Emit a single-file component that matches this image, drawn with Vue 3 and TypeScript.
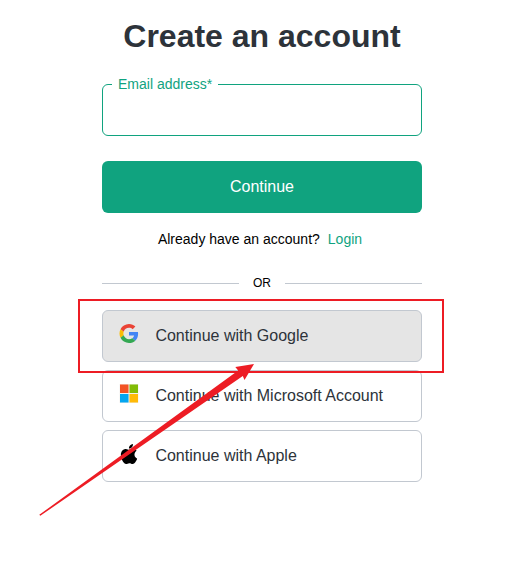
<script setup lang="ts">
import { ref } from 'vue'

interface Provider {
  id: 'google' | 'microsoft' | 'apple'
  label: string
}

const providers: Provider[] = [
  { id: 'google', label: 'Continue with Google' },
  { id: 'microsoft', label: 'Continue with Microsoft Account' },
  { id: 'apple', label: 'Continue with Apple' },
]
const highlighted = ref<Provider['id']>('google')
const email = ref('')
</script>

<template>
  <main class="page">
    <section class="signup">
      <h1 class="title">Create an account</h1>
      <form class="form" @submit.prevent>
        <div class="field">
          <input id="email" v-model="email" class="input" type="email" />
          <label class="label" for="email">Email address*</label>
        </div>
        <button class="submit" type="submit">Continue</button>
      </form>
      <p class="switch"><span>Already have an account?</span><a class="login">Login</a></p>
      <div class="divider"><span class="or">OR</span></div>
      <div class="providers">
        <button
          v-for="p in providers"
          :key="p.id"
          type="button"
          class="provider"
          :class="{ active: p.id === highlighted }"
        >
          <svg v-if="p.id === 'google'" class="icon" viewBox="0 0 48 48">
            <path fill="#EA4335" d="M24 9.5c3.54 0 6.71 1.22 9.21 3.6l6.85-6.85C35.9 2.38 30.47 0 24 0 14.62 0 6.51 5.38 2.56 13.22l7.98 6.19C12.43 13.72 17.74 9.5 24 9.5z" />
            <path fill="#4285F4" d="M46.98 24.55c0-1.57-.15-3.09-.38-4.55H24v9.02h12.94c-.58 2.96-2.26 5.48-4.78 7.18l7.73 6c4.51-4.18 7.09-10.36 7.09-17.65z" />
            <path fill="#FBBC05" d="M10.53 28.59c-.48-1.45-.76-2.99-.76-4.59s.27-3.14.76-4.59l-7.98-6.19C.92 16.46 0 20.12 0 24c0 3.88.92 7.54 2.56 10.78l7.97-6.19z" />
            <path fill="#34A853" d="M24 48c6.48 0 11.93-2.13 15.89-5.81l-7.73-6c-2.15 1.45-4.92 2.3-8.16 2.3-6.26 0-11.57-4.22-13.47-9.91l-7.98 6.19C6.51 42.62 14.62 48 24 48z" />
          </svg>
          <svg v-else-if="p.id === 'microsoft'" class="icon" viewBox="0 0 20 20">
            <path fill="#f3f0ee" d="M0 0h20v20H0z" />
            <path fill="#f35325" d="M.5.5h9v9h-9z" />
            <path fill="#81bc06" d="M10.5.5h9v9h-9z" />
            <path fill="#05a6f0" d="M.5 10.5h9v9h-9z" />
            <path fill="#ffba08" d="M10.5 10.5h9v9h-9z" />
          </svg>
          <svg v-else class="icon apple" viewBox="0 0 814 1000">
            <path d="M788 341c-6 4-108 62-108 190 0 148 130 201 134 202-1 3-21 72-69 142-43 62-88 124-156 124s-86-40-165-40c-77 0-104 41-166 41s-106-57-156-127C44 790 0 663 0 542 0 348 126 245 250 245c66 0 121 43 162 43 40 0 101-46 176-46 29 0 131 3 200 99zM554 159c31-37 53-88 53-139 0-7-1-14-2-20-51 2-111 34-147 76-28 32-55 83-55 135 0 8 1 16 2 18 3 1 8 2 14 2 45 0 102-30 135-72z" />
          </svg>
          <span>{{ p.label }}</span>
        </button>
      </div>
    </section>
    <div class="callout"></div>
    <svg class="arrow" viewBox="0 0 516 565">
      <path d="M39.3 514.8 238.2 370.6 235.3 367.1 254 363.9 244.5 380 242.8 375.9 40.3 515.8Z" />
    </svg>
  </main>
</template>

<style>
body {
  margin: 0;
  background: #fff;
}
</style>

<style scoped>
.page {
  position: relative;
  box-sizing: border-box;
  width: 516px;
  height: 565px;
  padding-left: 102px;
  overflow: hidden;
  font-family: "Liberation Sans", Arial, sans-serif;
  color: #000;
}
.signup {
  width: 320px;
}
.title {
  margin: 0;
  padding-top: 17px;
  text-align: center;
  font-size: 32px;
  line-height: 38px;
  color: #2d333a;
  white-space: nowrap;
}
.form {
  display: flex;
  flex-direction: column;
  gap: 25px;
  margin-top: 29px;
}
.field {
  position: relative;
  height: 52px;
}
.input {
  box-sizing: border-box;
  width: 100%;
  height: 52px;
  padding: 0 16px;
  display: block;
  border: 1px solid #10a37f;
  border-radius: 6px;
  background: #fff;
  font: inherit;
  outline: none;
}
.label {
  position: absolute;
  left: 10px;
  top: -8px;
  padding: 0 6px;
  background: #fff;
  color: #10a37f;
  font-size: 14px;
  line-height: 16px;
  white-space: nowrap;
}
.submit {
  height: 52px;
  padding: 0;
  border: 0;
  border-radius: 6px;
  background: #10a37f;
  color: #fff;
  font: 16px "Liberation Sans", Arial, sans-serif;
}
.switch {
  display: flex;
  justify-content: center;
  gap: 8px;
  margin: 18px 0 0;
  padding-right: 4px;
  font-size: 14px;
  line-height: 16px;
  white-space: nowrap;
}
.login {
  color: #10a37f;
}
.divider {
  display: flex;
  align-items: center;
  height: 17px;
  margin-top: 28px;
  font-size: 12px;
}
.divider::before,
.divider::after {
  content: "";
  flex: 1;
  height: 1px;
  background: #c2c8d0;
}
.or {
  width: 46px;
  padding-bottom: 1px;
  text-align: center;
}
.providers {
  display: flex;
  flex-direction: column;
  gap: 8px;
  margin-top: 18px;
}
.provider {
  display: flex;
  align-items: center;
  gap: 16px;
  box-sizing: border-box;
  height: 52px;
  padding: 0 16px;
  border: 1px solid #c2c8d0;
  border-radius: 6px;
  background: #fff;
  color: #2d333a;
  font: 16px "Liberation Sans", Arial, sans-serif;
}
.active {
  background: #e5e5e5;
}
.icon {
  width: 20px;
  height: 19px;
  margin-right: 0.4px;
  margin-bottom: 5px;
  flex: none;
}
.apple {
  height: 20px;
  margin-bottom: 4px;
}
.callout {
  position: absolute;
  left: 78px;
  top: 299px;
  box-sizing: border-box;
  width: 366px;
  height: 74px;
  border: 2px solid #ed1c24;
  pointer-events: none;
}
.arrow {
  position: absolute;
  left: 0;
  top: 0;
  width: 516px;
  height: 565px;
  fill: #ed1c24;
  pointer-events: none;
}
</style>
